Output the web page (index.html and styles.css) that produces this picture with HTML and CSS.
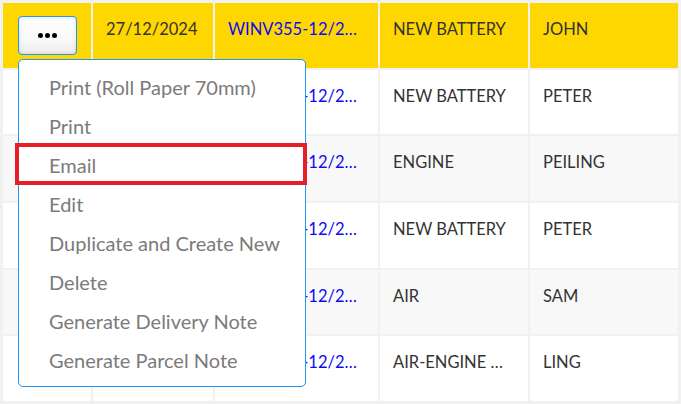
FILE: index.html
```html
<!DOCTYPE html>
<html>
<head>
<meta charset="utf-8">
<link rel="stylesheet" href="styles.css">
</head>
<body>
<table class="grid">
  <colgroup>
    <col class="c-act"><col class="c-date"><col class="c-no"><col class="c-desc"><col class="c-name">
  </colgroup>
  <tbody>
    <tr class="row selected">
      <td class="cell act">
        <button class="more-btn" type="button" aria-label="More actions">
          <svg width="19" height="5" viewBox="0 0 19 5"><circle cx="2.5" cy="2.5" r="2.5"/><circle cx="9.5" cy="2.5" r="2.5"/><circle cx="16.5" cy="2.5" r="2.5"/></svg>
        </button>
      </td>
      <td class="cell">27/12/2024</td>
      <td class="cell"><a class="doc-link" href="#">WINV355-12/2…</a></td>
      <td class="cell">NEW BATTERY</td>
      <td class="cell">JOHN</td>
    </tr>
    <tr class="row">
      <td class="cell act"></td>
      <td class="cell">27/12/2024</td>
      <td class="cell"><a class="doc-link" href="#">WINV354-12/2…</a></td>
      <td class="cell">NEW BATTERY</td>
      <td class="cell">PETER</td>
    </tr>
    <tr class="row alt">
      <td class="cell act"></td>
      <td class="cell">26/12/2024</td>
      <td class="cell"><a class="doc-link" href="#">WINV353-12/2…</a></td>
      <td class="cell">ENGINE</td>
      <td class="cell">PEILING</td>
    </tr>
    <tr class="row">
      <td class="cell act"></td>
      <td class="cell">26/12/2024</td>
      <td class="cell"><a class="doc-link" href="#">WINV352-12/2…</a></td>
      <td class="cell">NEW BATTERY</td>
      <td class="cell">PETER</td>
    </tr>
    <tr class="row alt">
      <td class="cell act"></td>
      <td class="cell">24/12/2024</td>
      <td class="cell"><a class="doc-link" href="#">WINV351-12/2…</a></td>
      <td class="cell">AIR</td>
      <td class="cell">SAM</td>
    </tr>
    <tr class="row">
      <td class="cell act"></td>
      <td class="cell">23/12/2024</td>
      <td class="cell"><a class="doc-link" href="#">WINV350-12/2…</a></td>
      <td class="cell">AIR-ENGINE …</td>
      <td class="cell">LING</td>
    </tr>
  </tbody>
</table>

<ul class="menu">
  <li class="menu-item">Print (Roll Paper 70mm)</li>
  <li class="menu-item">Print</li>
  <li class="menu-item">Email</li>
  <li class="menu-item">Edit</li>
  <li class="menu-item">Duplicate and Create New</li>
  <li class="menu-item">Delete</li>
  <li class="menu-item">Generate Delivery Note</li>
  <li class="menu-item">Generate Parcel Note</li>
</ul>

<div class="highlight"></div>
</body>
</html>
```

FILE: styles.css
```css
html, body {
  margin: 0;
  padding: 0;
}
body {
  width: 681px;
  height: 404px;
  overflow: hidden;
  background: #f1f1f1;
  font-family: Lato, "Noto Sans", sans-serif;
  font-size: 16.5px;
  color: #333333;
  position: relative;
}
.grid {
  border-collapse: separate;
  border-spacing: 2px;
  margin: 1px 0 0 1px;
  table-layout: fixed;
  width: 679px;
  background: #f1f1f1;
}
.c-act { width: 88px; }
.c-date { width: 120px; }
.c-no { width: 163px; }
.c-desc { width: 148px; }
.c-name { width: 148px; }

.row .cell {
  height: 64.67px;
  box-sizing: border-box;
  padding: 14px 13px 0;
  vertical-align: top;
  background: #ffffff;
  white-space: nowrap;
  overflow: hidden;
  line-height: 24px;
}
.row.alt .cell { background: #f8f8f8; }
.row.selected .cell { background: #ffd700; }

.doc-link {
  color: #0c0cf2;
  text-decoration: none;
}

.row .cell.act { padding: 13px 0 0 15px; }

.more-btn {
  width: 59px;
  height: 39px;
  box-sizing: border-box;
  border: 1px solid #2196f3;
  border-radius: 4px;
  background: linear-gradient(#ffffff 0%, #f9f9f9 60%, #ececec 100%);
  box-shadow: inset 0 0 4px rgba(0,0,0,0.12);
  display: flex;
  align-items: center;
  justify-content: center;
  padding: 0;
  margin: 0;
}
.more-btn svg { fill: #000; display: block; }

.menu {
  position: absolute;
  left: 18px;
  top: 59px;
  width: 288px;
  height: 328px;
  box-sizing: border-box;
  margin: 0;
  padding: 8px 0;
  list-style: none;
  background: #ffffff;
  border: 1px solid #2196f3;
  border-radius: 5px;
  font-size: 20px;
}
.menu-item {
  height: 39px;
  line-height: 39px;
  padding-left: 30px;
  color: #7b7b7b;
  white-space: nowrap;
}

.highlight {
  position: absolute;
  left: 15px;
  top: 143px;
  width: 292px;
  height: 42px;
  box-sizing: border-box;
  border: 4px solid #e61e27;
}
```
